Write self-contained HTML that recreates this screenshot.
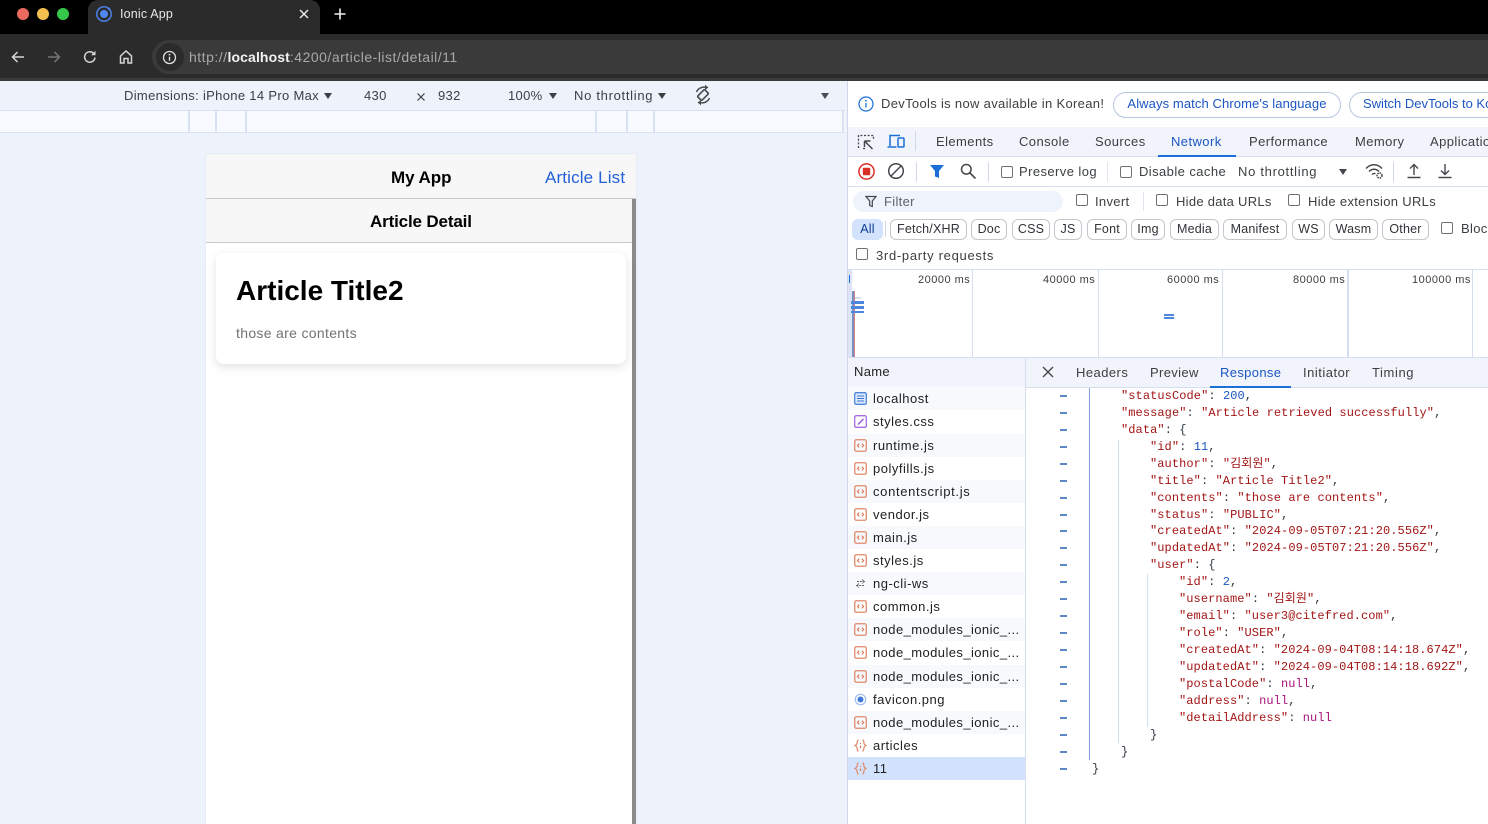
<!DOCTYPE html>
<html><head><meta charset="utf-8"><title>Ionic App</title>
<style>
html,body{margin:0;padding:0;width:1488px;height:824px;overflow:hidden;background:#fff}
body{font-family:"Liberation Sans","Noto Sans CJK KR",sans-serif;position:relative;color:#1f1f1f}
.a{position:absolute}
.t{position:absolute;white-space:nowrap;line-height:16px;font-size:13px;letter-spacing:.32px;color:#3c4043}
.m{position:absolute;white-space:pre;font:12px/17px "Liberation Mono","Noto Sans CJK KR",monospace;letter-spacing:.08px;color:#a31515}
.m i{font-style:normal;color:#303942}.m b{font-weight:normal;color:#1a56c4}.m u{text-decoration:none;color:#a8127a}
.d{position:absolute;left:1060px;width:7px;height:1.5px;background:#5b87c9}
.cb{position:absolute;width:10px;height:10px;border:1px solid #6f7276;border-radius:2px;background:#fff}
.p{position:absolute;top:219px;height:19px;border:1px solid #c4c7cc;border-radius:6px;line-height:19px;font-size:12.5px;text-align:center;color:#303337;box-sizing:content-box;letter-spacing:.2px}
.r{position:absolute;left:848px;width:177px;height:23.1px}
.r .t{left:25px;top:4px;color:#202124;letter-spacing:.5px}
.r .n{letter-spacing:.42px}
.r svg{position:absolute;left:6px;top:5px}
.v{position:absolute;width:1px;background:#d3def2}
.tab{position:absolute;top:134px;font-size:13px;letter-spacing:.42px}
</style></head><body>
<svg width="0" height="0" style="position:absolute"><defs>
<symbol id="js" viewBox="0 0 13 13"><rect x=".75" y=".75" width="11.5" height="11.5" rx="1.5" fill="none" stroke="#e0896a" stroke-width="1.3"/><path d="M5.2 4.6 3.4 6.5l1.8 1.9M7.8 4.6l1.8 1.9-1.8 1.9" fill="none" stroke="#d9754f" stroke-width="1.1"/></symbol>
<symbol id="js2" viewBox="0 0 13 13"><path d="M4.5 1C2.8 1 3.4 3 3 4.500 2.800 5.500 2 6 1 6.500 2 7 2.800 7.500 3 8.500 3.400 10 2.800 12 4.500 12M8.500 1c1.700 0 1.100 2 1.500 3.500.2 1 1 1.500 2 2-1 .5-1.800 1-2 2-.4 1.500.2 3.500-1.500 3.500" fill="none" stroke="#e0896a" stroke-width="1.200"/><path d="M6.500 4v1M6.500 6.500V9" stroke="#d9754f" stroke-width="1.200"/></symbol>
</defs></svg>

<!-- browser chrome -->
<div class="a" style="left:0;top:0;width:1488px;height:34px;background:#000"></div>
<div class="a" style="left:0;top:34px;width:1488px;height:46px;background:#2b2b2b"></div>
<div class="a" style="left:0;top:78px;width:1488px;height:3px;background:#3b3b3b"></div>
<div class="a" style="left:88px;top:0;width:232px;height:34px;background:#2b2b2b;border-radius:10px 10px 0 0"></div>
<div class="a" style="left:17px;top:8px;width:12px;height:12px;border-radius:50%;background:#ed6a5e"></div>
<div class="a" style="left:37px;top:8px;width:12px;height:12px;border-radius:50%;background:#f4bf4f"></div>
<div class="a" style="left:57px;top:8px;width:12px;height:12px;border-radius:50%;background:#34c749"></div>
<svg class="a" style="left:95px;top:5px" width="18" height="18" viewBox="0 0 18 18"><circle cx="9" cy="9" r="7.200" fill="none" stroke="#4a80e8" stroke-width="1.500"/><circle cx="9" cy="9" r="4" fill="#4f86f0"/><circle cx="14" cy="3.800" r="1.300" fill="#4f86f0"/></svg>
<span class="t" style="left:120px;top:6px;font-size:12.5px;color:#e8e8e8;letter-spacing:.17px">Ionic App</span>
<svg class="a" style="left:299px;top:9px" width="10" height="10" viewBox="0 0 10 10"><path d="M1 1l8 8M9 1 1 9" stroke="#e8e8e8" stroke-width="1.500"/></svg>
<svg class="a" style="left:334px;top:8px" width="12" height="12" viewBox="0 0 12 12"><path d="M6 .5v11M.5 6h11" stroke="#f0f0f0" stroke-width="1.600"/></svg>
<svg class="a" style="left:10px;top:49px" width="16" height="16" viewBox="0 0 16 16"><path d="M14 8H3M7.500 3 2.500 8l5 5" fill="none" stroke="#d6d6d6" stroke-width="1.500"/></svg>
<svg class="a" style="left:46px;top:49px" width="16" height="16" viewBox="0 0 16 16"><path d="M2 8h11M8.500 3l5 5-5 5" fill="none" stroke="#757575" stroke-width="1.500"/></svg>
<svg class="a" style="left:82px;top:49px" width="16" height="16" viewBox="0 0 16 16"><path d="M13 8.500A5.200 5.200 0 1 1 11.500 4.300L13 5.500" fill="none" stroke="#d6d6d6" stroke-width="1.500"/><path d="M13.500 1.800v4.400H9.100z" fill="#d6d6d6"/></svg>
<svg class="a" style="left:118px;top:49px" width="16" height="16" viewBox="0 0 16 16"><path d="M2.500 7 8 2l5.500 5v7H10V9.500H6V14H2.500z" fill="none" stroke="#d6d6d6" stroke-width="1.500"/></svg>
<div class="a" style="left:152px;top:40px;width:1336px;height:34px;border-radius:17px 0 0 17px;background:#3a3a3a"></div>
<div class="a" style="left:156px;top:43px;width:28px;height:28px;border-radius:50%;background:#2b2b2b"></div>
<svg class="a" style="left:162px;top:50px" width="15" height="15" viewBox="0 0 15 15"><circle cx="7.500" cy="7.500" r="6" fill="none" stroke="#e0e0e0" stroke-width="1.300"/><path d="M7.500 6.700v4" stroke="#e0e0e0" stroke-width="1.400"/><circle cx="7.500" cy="4.600" r=".9" fill="#e0e0e0"/></svg>
<span class="t" style="left:189px;top:49px;font-size:14px;color:#a9a9a9;letter-spacing:.5px">http://<span style="color:#f2f2f2;font-weight:bold;letter-spacing:.1px">localhost</span>:4200/article-list/detail/11</span>

<!-- device toolbar -->
<div class="a" style="left:0;top:81px;width:848px;height:743px;background:#eef2fa"></div>
<div class="a" style="left:0;top:110px;width:845px;height:21px;background:#f8faff;border-top:1px solid #d9e2f3;border-bottom:1px solid #d9e2f3;box-sizing:content-box"></div>
<div class="a" style="left:188px;top:111px;width:2px;height:21px;background:#d9e2f3"></div>
<div class="a" style="left:215px;top:111px;width:2px;height:21px;background:#d9e2f3"></div>
<div class="a" style="left:245px;top:111px;width:2px;height:21px;background:#d9e2f3"></div>
<div class="a" style="left:595px;top:111px;width:2px;height:21px;background:#d9e2f3"></div>
<div class="a" style="left:626px;top:111px;width:2px;height:21px;background:#d9e2f3"></div>
<div class="a" style="left:653px;top:111px;width:2px;height:21px;background:#d9e2f3"></div>
<div class="a" style="left:842px;top:111px;width:2px;height:21px;background:#d9e2f3"></div>
<span class="t" style="left:124px;top:88px">Dimensions: iPhone 14 Pro Max</span>
<span class="a" style="left:324px;top:93px;border:4px solid transparent;border-top:6px solid #3c4043"></span>
<span class="t" style="left:364px;top:88px">430</span>
<svg class="a" style="left:416px;top:92px" width="10" height="10" viewBox="0 0 10 10"><path d="M1.500 1.500l7 7M8.500 1.500l-7 7" stroke="#3c4043" stroke-width="1.200"/></svg>
<span class="t" style="left:438px;top:88px">932</span>
<span class="t" style="left:508px;top:88px">100%</span>
<span class="a" style="left:549px;top:93px;border:4px solid transparent;border-top:6px solid #3c4043"></span>
<span class="t" style="left:574px;top:88px;letter-spacing:.7px">No throttling</span>
<span class="a" style="left:658px;top:93px;border:4px solid transparent;border-top:6px solid #3c4043"></span>
<svg class="a" style="left:692px;top:84px" width="22" height="22" viewBox="0 0 22 22"><g fill="none" stroke="#4a4d50"><rect x="8" y="6" width="6" height="10" rx="1.200" transform="rotate(45 11 11)" stroke-width="1.700"/><path d="M4.500 8A8 8 0 0 1 13.500 3.300M17.500 14A8 8 0 0 1 8.500 18.700" stroke-width="1.500"/></g><path d="M13 .8l3.500 2.700L13 6zM9 16l-3.500 2.500L9 21.200z" fill="#4a4d50"/></svg>
<span class="a" style="left:821px;top:93px;border:4.500px solid transparent;border-top:6px solid #4a4d50"></span>

<!-- phone -->
<div class="a" style="left:206px;top:154px;width:430px;height:670px;background:#fff;box-shadow:0 0 1px rgba(60,70,90,.2)"></div>
<div class="a" style="left:206px;top:154px;width:430px;height:45px;background:#f7f7f7;border-bottom:1px solid #c9c9cb;box-sizing:border-box"></div>
<div class="a" style="left:206px;top:199px;width:426px;height:44px;background:#f7f7f7;border-bottom:1px solid #c9c9cb;box-sizing:border-box"></div>
<div class="a" style="left:632px;top:199px;width:4px;height:625px;background:#8b8b8b"></div>
<span class="t" style="left:391px;top:169px;font-size:17px;line-height:18px;font-weight:bold;color:#000;letter-spacing:-.05px">My App</span>
<span class="t" style="left:545px;top:169px;font-size:17px;line-height:18px;color:#2460d8;letter-spacing:.15px">Article List</span>
<span class="t" style="left:370px;top:213px;font-size:17px;line-height:18px;font-weight:bold;color:#000;letter-spacing:-.15px">Article Detail</span>
<div class="a" style="left:216px;top:253px;width:410px;height:111px;background:#fff;border-radius:8px;box-shadow:0 3px 10px rgba(0,0,0,.12)"></div>
<span class="t" style="left:236px;top:275px;font-size:28px;line-height:32px;font-weight:bold;color:#000;letter-spacing:0">Article Title2</span>
<span class="t" style="left:236px;top:325px;font-size:14px;color:#737373;letter-spacing:.32px">those are contents</span>

<!-- devtools -->
<div class="a" style="left:847px;top:81px;width:1px;height:743px;background:#cfd8e8"></div>
<svg class="a" style="left:858px;top:96px" width="16" height="16" viewBox="0 0 16 16"><circle cx="8" cy="8" r="7" fill="none" stroke="#1a6fd8" stroke-width="1.200"/><path d="M8 7v4.500" stroke="#1a6fd8" stroke-width="1.300"/><circle cx="8" cy="4.800" r=".9" fill="#1a6fd8"/></svg>
<span class="t" style="left:881px;top:96px">DevTools is now available in Korean!</span>
<div class="a" style="left:1113px;top:92px;width:226px;height:24px;border:1px solid #b7c6e0;border-radius:13px;text-align:center;line-height:22px;font-size:13px;color:#1a56c4;letter-spacing:.1px">Always match Chrome's language</div>
<div class="a" style="left:1349px;top:92px;width:170px;height:24px;border:1px solid #b7c6e0;border-radius:13px;line-height:22px;font-size:13px;color:#1a56c4;white-space:nowrap;padding-left:13px;box-sizing:content-box">Switch DevTools to Korean</div>

<div class="a" style="left:848px;top:127px;width:640px;height:30px;background:#f1f4fb;border-bottom:1px solid #d6dfef;box-sizing:border-box"></div>
<svg class="a" style="left:857px;top:133px" width="18" height="18" viewBox="0 0 18 18"><path d="M1.500 15V2.500h15V6" fill="none" stroke="#45484c" stroke-width="1.300" stroke-dasharray="2 1.600"/><path d="M8 15.500H5" stroke="#45484c" stroke-width="1.300" stroke-dasharray="2 1.600"/><path d="M7.500 8h6M7.500 8v6M7.500 8l8 8" fill="none" stroke="#45484c" stroke-width="1.500"/></svg>
<svg class="a" style="left:887px;top:133px" width="19" height="17" viewBox="0 0 19 17"><path d="M3 13V2.500h10M.5 14h9" fill="none" stroke="#1a6fd8" stroke-width="1.500"/><rect x="11" y="5" width="6" height="9" rx="1" fill="none" stroke="#1a6fd8" stroke-width="1.500"/></svg>
<div class="a" style="left:915px;top:131px;width:1px;height:20px;background:#d0d7e5"></div>
<span class="t tab" style="left:936px">Elements</span>
<span class="t tab" style="left:1019px">Console</span>
<span class="t tab" style="left:1095px">Sources</span>
<span class="t tab" style="left:1171px;color:#1a56c4">Network</span>
<span class="t tab" style="left:1249px">Performance</span>
<span class="t tab" style="left:1355px">Memory</span>
<span class="t tab" style="left:1430px">Application</span>
<div class="a" style="left:1158px;top:155px;width:78px;height:2px;background:#1a6fd8"></div>

<svg class="a" style="left:857px;top:162px" width="19" height="19" viewBox="0 0 19 19"><circle cx="9.500" cy="9.500" r="7.600" fill="none" stroke="#d93025" stroke-width="1.500"/><rect x="5.800" y="5.800" width="7.400" height="7.400" rx="1" fill="#d93025"/></svg>
<svg class="a" style="left:887px;top:162px" width="18" height="18" viewBox="0 0 18 18"><circle cx="9" cy="9" r="7.300" fill="none" stroke="#45484c" stroke-width="1.500"/><path d="M14 4 4 14" stroke="#45484c" stroke-width="1.500"/></svg>
<div class="a" style="left:916px;top:162px;width:1px;height:20px;background:#d0d7e5"></div>
<svg class="a" style="left:929px;top:164px" width="16" height="15" viewBox="0 0 16 15"><path d="M1 1h14L10 7v7l-4-1.500V7z" fill="#1a6fd8"/></svg>
<svg class="a" style="left:959px;top:162px" width="18" height="18" viewBox="0 0 18 18"><circle cx="7.300" cy="7.300" r="4.800" fill="none" stroke="#45484c" stroke-width="1.500"/><path d="m11 11 5.500 5.500" stroke="#45484c" stroke-width="1.600"/></svg>
<div class="a" style="left:988px;top:162px;width:1px;height:20px;background:#d0d7e5"></div>
<div class="cb" style="left:1001px;top:166px"></div>
<span class="t" style="left:1019px;top:164px;letter-spacing:.42px">Preserve log</span>
<div class="a" style="left:1107px;top:162px;width:1px;height:20px;background:#e0e5ef"></div>
<div class="cb" style="left:1120px;top:166px"></div>
<span class="t" style="left:1139px;top:164px;letter-spacing:.42px">Disable cache</span>
<span class="t" style="left:1238px;top:164px;letter-spacing:.7px">No throttling</span>
<span class="a" style="left:1339px;top:169px;border:4.500px solid transparent;border-top:6px solid #45484c"></span>
<svg class="a" style="left:1365px;top:162px" width="20" height="18" viewBox="0 0 20 18"><path d="M1 6.500C5.500 1.500 12.500 1.500 17 6.500M4 9.500c3-3 7-3 10 0M7 12.500c1-1 2.500-1.200 3.500-.7" fill="none" stroke="#45484c" stroke-width="1.400"/><circle cx="14.500" cy="13.500" r="2.500" fill="none" stroke="#45484c" stroke-width="1.500" stroke-dasharray="1.500 .8"/></svg>
<div class="a" style="left:1393px;top:162px;width:1px;height:20px;background:#d0d7e5"></div>
<svg class="a" style="left:1406px;top:162px" width="16" height="18" viewBox="0 0 16 18"><path d="M8 13V3M4 6.500 8 2.500l4 4M1.500 15.500h13" fill="none" stroke="#45484c" stroke-width="1.400"/></svg>
<svg class="a" style="left:1437px;top:162px" width="16" height="18" viewBox="0 0 16 18"><path d="M8 2v10M4 8.500l4 4 4-4M1.500 15.500h13" fill="none" stroke="#45484c" stroke-width="1.400"/></svg>
<div class="a" style="left:848px;top:186px;width:640px;height:1px;background:#d6dfef"></div>

<div class="a" style="left:853px;top:191px;width:210px;height:21px;border-radius:11px;background:#eff3fb"></div>
<svg class="a" style="left:865px;top:195px" width="12" height="13" viewBox="0 0 12 13"><path d="M1 1.500h10L7.300 6v5.500l-2.600-1V6z" fill="none" stroke="#45484c" stroke-width="1.200"/></svg>
<span class="t" style="left:884px;top:194px;color:#5f6368">Filter</span>
<div class="cb" style="left:1076px;top:194px"></div>
<span class="t" style="left:1095px;top:194px">Invert</span>
<div class="a" style="left:1143px;top:192px;width:1px;height:19px;background:#e0e5ef"></div>
<div class="cb" style="left:1156px;top:194px"></div>
<span class="t" style="left:1176px;top:194px;letter-spacing:.28px">Hide data URLs</span>
<div class="cb" style="left:1288px;top:194px"></div>
<span class="t" style="left:1308px;top:194px;letter-spacing:.31px">Hide extension URLs</span>

<div class="p" style="left:852px;width:29px;background:#d3e3fd;border-color:#d3e3fd;color:#0b3d91">All</div>
<div class="a" style="left:885px;top:221px;width:1px;height:16px;background:#d0d7e5"></div>
<div class="p" style="left:890px;width:75px">Fetch/XHR</div>
<div class="p" style="left:971px;width:34px">Doc</div>
<div class="p" style="left:1012px;width:36px">CSS</div>
<div class="p" style="left:1054px;width:26px">JS</div>
<div class="p" style="left:1087px;width:38px">Font</div>
<div class="p" style="left:1131px;width:32px">Img</div>
<div class="p" style="left:1170px;width:47px">Media</div>
<div class="p" style="left:1223px;width:62px">Manifest</div>
<div class="p" style="left:1292px;width:31px">WS</div>
<div class="p" style="left:1329px;width:47px">Wasm</div>
<div class="p" style="left:1382px;width:45px">Other</div>
<div class="cb" style="left:1441px;top:222px"></div>
<span class="t" style="left:1461px;top:221px">Blocked</span>
<div class="cb" style="left:856px;top:248px"></div>
<span class="t" style="left:876px;top:248px;letter-spacing:.7px">3rd-party requests</span>
<div class="a" style="left:848px;top:269px;width:640px;height:1px;background:#d6dfef"></div>

<!-- timeline -->
<div class="a" style="left:972px;top:270px;width:1px;height:88px;background:#d6dfef"></div>
<div class="a" style="left:1098px;top:270px;width:1px;height:88px;background:#d6dfef"></div>
<div class="a" style="left:1222px;top:270px;width:1px;height:88px;background:#d6dfef"></div>
<div class="a" style="left:1347px;top:270px;width:2px;height:88px;background:#d6dfef"></div>
<div class="a" style="left:1472px;top:270px;width:1px;height:88px;background:#d6dfef"></div>
<span class="t" style="left:918px;top:272px;font-size:11px;letter-spacing:.5px">20000 ms</span>
<span class="t" style="left:1043px;top:272px;font-size:11px;letter-spacing:.5px">40000 ms</span>
<span class="t" style="left:1167px;top:272px;font-size:11px;letter-spacing:.5px">60000 ms</span>
<span class="t" style="left:1293px;top:272px;font-size:11px;letter-spacing:.5px">80000 ms</span>
<span class="t" style="left:1412px;top:272px;font-size:11px;letter-spacing:.5px">100000 ms</span>
<div class="a" style="left:848px;top:270px;width:4px;height:87px;background:#dbe5f7"></div>
<div class="a" style="left:849px;top:275px;width:1px;height:8px;background:#1a6fd8"></div>
<div class="a" style="left:852px;top:291px;width:1.500px;height:66px;background:#7d8fc0"></div>
<div class="a" style="left:853.500px;top:291px;width:1.500px;height:66px;background:#cf8080"></div>
<div class="a" style="left:855px;top:297px;width:6px;height:2px;background:#dde0e6"></div>
<div class="a" style="left:851px;top:301px;width:13px;height:2.500px;background:#4f86dd"></div>
<div class="a" style="left:851px;top:306px;width:13px;height:2.500px;background:#4f86dd"></div>
<div class="a" style="left:851px;top:310.500px;width:13px;height:2.500px;background:#4f86dd"></div>
<div class="a" style="left:1164px;top:314px;width:10px;height:2px;background:#4f86dd"></div>
<div class="a" style="left:1164px;top:317px;width:10px;height:2px;background:#4f86dd"></div>

<!-- split headers -->
<div class="a" style="left:848px;top:357px;width:640px;height:31px;background:#f1f4fb;border-top:1px solid #d6dfef;border-bottom:1px solid #d6dfef;box-sizing:border-box"></div>
<div class="a" style="left:1025px;top:358px;width:1px;height:466px;background:#d6dfef"></div>
<span class="t" style="left:854px;top:364px;color:#202124">Name</span>
<svg class="a" style="left:1042px;top:366px" width="12" height="12" viewBox="0 0 12 12"><path d="M1 1l10 10M11 1 1 11" stroke="#45484c" stroke-width="1.400"/></svg>
<span class="t" style="left:1076px;top:365px;letter-spacing:.45px">Headers</span>
<span class="t" style="left:1150px;top:365px;letter-spacing:.35px">Preview</span>
<span class="t" style="left:1220px;top:365px;color:#1a56c4;letter-spacing:.35px">Response</span>
<span class="t" style="left:1303px;top:365px;letter-spacing:.5px">Initiator</span>
<span class="t" style="left:1372px;top:365px;letter-spacing:.6px">Timing</span>
<div class="a" style="left:1210px;top:386px;width:81px;height:2px;background:#1a6fd8"></div>

<!-- name list -->
<div class="r" style="top:387px;background:#f7f9fd"><svg width="13" height="13" viewBox="0 0 13 13"><rect x=".7" y=".7" width="11.600" height="11.600" rx="1.500" fill="#dce8fb" stroke="#4f86dd" stroke-width="1.300"/><path d="M3 4h7M3 6.500h7M3 9h7" stroke="#3f78d6"/></svg><span class="t">localhost</span></div>
<div class="r" style="top:410px"><svg width="13" height="13" viewBox="0 0 13 13"><rect x=".7" y=".7" width="11.600" height="11.600" rx="1.500" fill="none" stroke="#a76be0" stroke-width="1.300"/><path d="M4 9.500 9.500 4" stroke="#9150d8" stroke-width="1.300"/></svg><span class="t">styles.css</span></div>
<div class="r" style="top:433.500px;background:#f7f9fd"><svg width="13" height="13"><use href="#js"/></svg><span class="t">runtime.js</span></div>
<div class="r" style="top:456.600px"><svg width="13" height="13"><use href="#js"/></svg><span class="t">polyfills.js</span></div>
<div class="r" style="top:479.700px;background:#f7f9fd"><svg width="13" height="13"><use href="#js"/></svg><span class="t" style="letter-spacing:.67px">contentscript.js</span></div>
<div class="r" style="top:502.800px"><svg width="13" height="13"><use href="#js"/></svg><span class="t">vendor.js</span></div>
<div class="r" style="top:525.900px;background:#f7f9fd"><svg width="13" height="13"><use href="#js"/></svg><span class="t">main.js</span></div>
<div class="r" style="top:549px"><svg width="13" height="13"><use href="#js"/></svg><span class="t">styles.js</span></div>
<div class="r" style="top:572.100px;background:#f7f9fd"><svg width="13" height="13" viewBox="0 0 13 13"><path d="M3 4.500h7M8 2.500l2.500 2-2.500 2M10 8.500H3M5 6.500l-2.500 2 2.500 2" fill="none" stroke="#5f6368" stroke-width="1" stroke-dasharray="2 .8"/></svg><span class="t">ng-cli-ws</span></div>
<div class="r" style="top:595.200px"><svg width="13" height="13"><use href="#js"/></svg><span class="t">common.js</span></div>
<div class="r" style="top:618.300px;background:#f7f9fd"><svg width="13" height="13"><use href="#js"/></svg><span class="t n">node_modules_ionic_...</span></div>
<div class="r" style="top:641.400px"><svg width="13" height="13"><use href="#js"/></svg><span class="t n">node_modules_ionic_...</span></div>
<div class="r" style="top:664.500px;background:#f7f9fd"><svg width="13" height="13"><use href="#js"/></svg><span class="t n">node_modules_ionic_...</span></div>
<div class="r" style="top:687.600px"><svg width="13" height="13" viewBox="0 0 13 13"><circle cx="6.500" cy="6.500" r="5.200" fill="none" stroke="#9dbdf0" stroke-width="1.200"/><circle cx="6.500" cy="6.500" r="3" fill="#3f78d6"/></svg><span class="t">favicon.png</span></div>
<div class="r" style="top:710.700px;background:#f7f9fd"><svg width="13" height="13"><use href="#js"/></svg><span class="t n">node_modules_ionic_...</span></div>
<div class="r" style="top:733.800px"><svg width="13" height="13"><use href="#js2"/></svg><span class="t">articles</span></div>
<div class="r" style="top:756.900px;background:#d3e3fd"><svg width="13" height="13"><use href="#js2"/></svg><span class="t">11</span></div>

<!-- response -->
<div class="v" style="left:1089px;top:388px;height:372px;background:#7fa3da"></div>
<div class="v" style="left:1118px;top:440px;height:303px"></div>
<div class="v" style="left:1147px;top:574px;height:153px"></div>
<div class="d" style="top:395px"></div><div class="d" style="top:412px"></div><div class="d" style="top:429px"></div><div class="d" style="top:446px"></div><div class="d" style="top:463px"></div><div class="d" style="top:480px"></div><div class="d" style="top:497px"></div><div class="d" style="top:514px"></div><div class="d" style="top:530px"></div><div class="d" style="top:547px"></div><div class="d" style="top:564px"></div><div class="d" style="top:581px"></div><div class="d" style="top:598px"></div><div class="d" style="top:615px"></div><div class="d" style="top:632px"></div><div class="d" style="top:649px"></div><div class="d" style="top:666px"></div><div class="d" style="top:683px"></div><div class="d" style="top:700px"></div><div class="d" style="top:717px"></div><div class="d" style="top:734px"></div><div class="d" style="top:751px"></div><div class="d" style="top:768px"></div>
<div class="m" style="left:1121px;top:388px">"statusCode"<i>: </i><b>200</b><i>,</i></div>
<div class="m" style="left:1121px;top:405px">"message"<i>: </i>"Article retrieved successfully"<i>,</i></div>
<div class="m" style="left:1121px;top:422px">"data"<i>: {</i></div>
<div class="m" style="left:1150px;top:439px">"id"<i>: </i><b>11</b><i>,</i></div>
<div class="m" style="left:1150px;top:456px">"author"<i>: </i>"김회원"<i>,</i></div>
<div class="m" style="left:1150px;top:473px">"title"<i>: </i>"Article Title2"<i>,</i></div>
<div class="m" style="left:1150px;top:490px">"contents"<i>: </i>"those are contents"<i>,</i></div>
<div class="m" style="left:1150px;top:507px">"status"<i>: </i>"PUBLIC"<i>,</i></div>
<div class="m" style="left:1150px;top:523px">"createdAt"<i>: </i>"2024-09-05T07:21:20.556Z"<i>,</i></div>
<div class="m" style="left:1150px;top:540px">"updatedAt"<i>: </i>"2024-09-05T07:21:20.556Z"<i>,</i></div>
<div class="m" style="left:1150px;top:557px">"user"<i>: {</i></div>
<div class="m" style="left:1179px;top:574px">"id"<i>: </i><b>2</b><i>,</i></div>
<div class="m" style="left:1179px;top:591px">"username"<i>: </i>"김회원"<i>,</i></div>
<div class="m" style="left:1179px;top:608px">"email"<i>: </i>"user3@citefred.com"<i>,</i></div>
<div class="m" style="left:1179px;top:625px">"role"<i>: </i>"USER"<i>,</i></div>
<div class="m" style="left:1179px;top:642px">"createdAt"<i>: </i>"2024-09-04T08:14:18.674Z"<i>,</i></div>
<div class="m" style="left:1179px;top:659px">"updatedAt"<i>: </i>"2024-09-04T08:14:18.692Z"<i>,</i></div>
<div class="m" style="left:1179px;top:676px">"postalCode"<i>: </i><u>null</u><i>,</i></div>
<div class="m" style="left:1179px;top:693px">"address"<i>: </i><u>null</u><i>,</i></div>
<div class="m" style="left:1179px;top:710px">"detailAddress"<i>: </i><u>null</u></div>
<div class="m" style="left:1150px;top:727px"><i>}</i></div>
<div class="m" style="left:1121px;top:744px"><i>}</i></div>
<div class="m" style="left:1092px;top:761px"><i>}</i></div>
</body></html>
